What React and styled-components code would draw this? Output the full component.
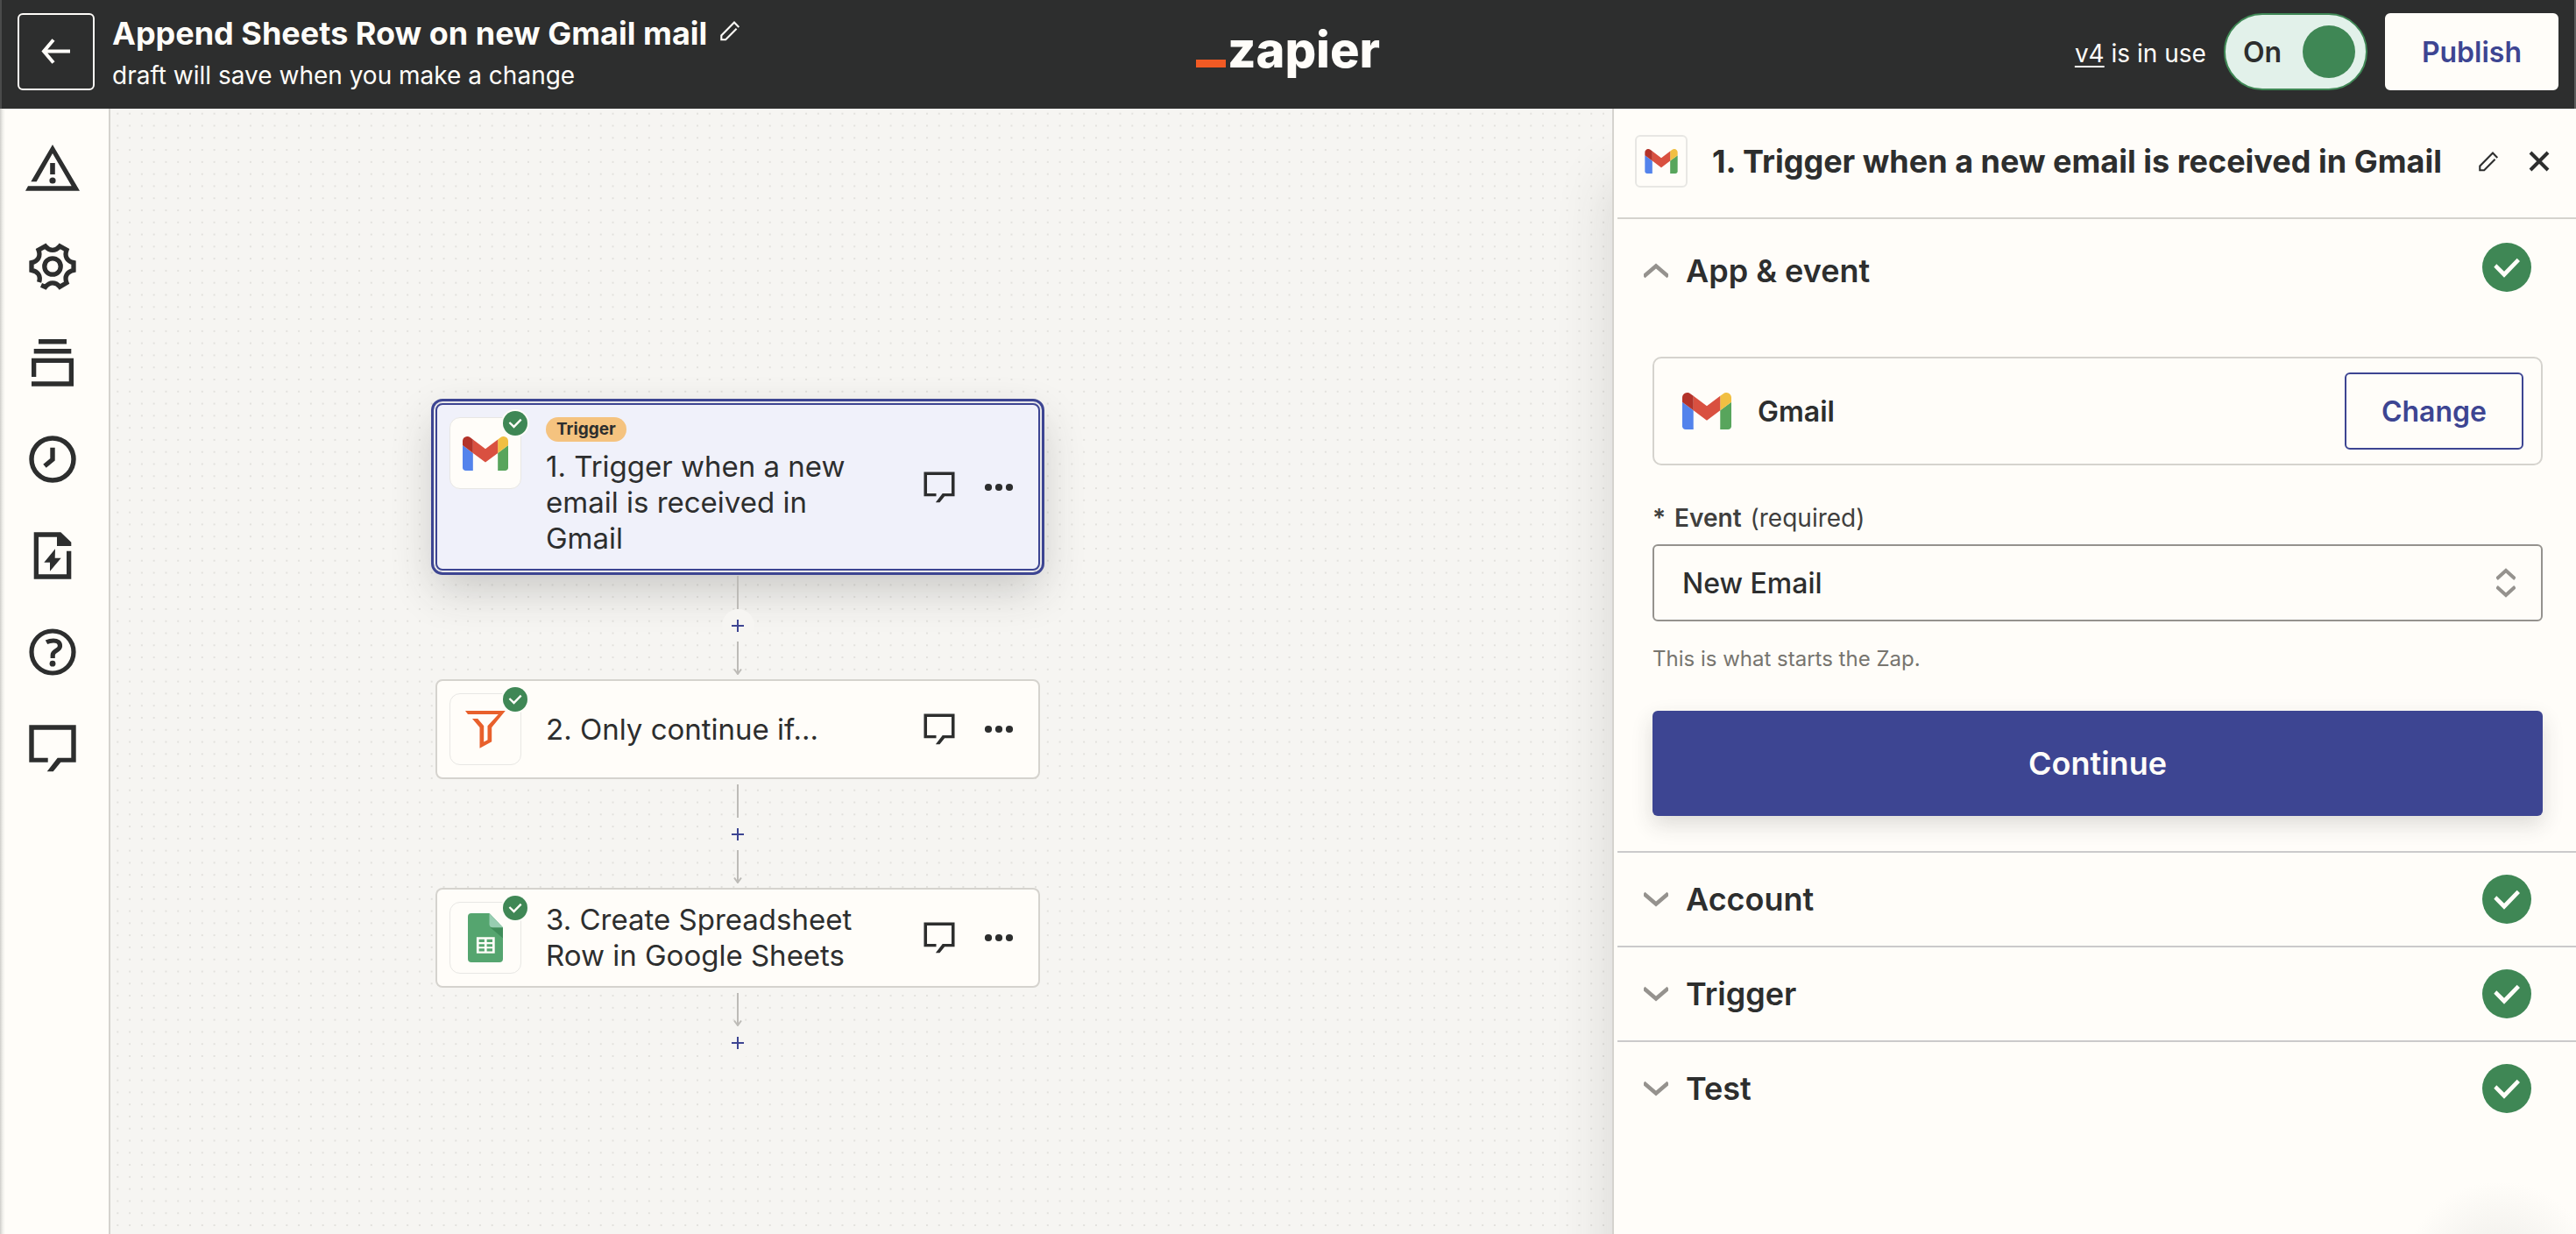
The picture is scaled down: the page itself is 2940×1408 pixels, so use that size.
import React, { useState } from "react";
import styled, { createGlobalStyle, css } from "styled-components";

const c = {
  ink: "#2d2e2e",
  paper: "#fffdf9",
  canvas: "#f6f5f2",
  line: "#d5d3ce",
  faint: "#e8e7e4",
  muted: "#95928e",
  indigo: "#3d4592",
  green: "#3f8755",
};

const GlobalStyle = createGlobalStyle`
  *, *::before, *::after { box-sizing: border-box; }
  body {
    margin: 0;
    font-family: Inter, "Liberation Sans", sans-serif;
    color: ${c.ink};
    background: ${c.paper};
  }
  button, select, input { font: inherit; color: inherit; }
  button { cursor: pointer; }
  h1, h2, p { margin: 0; }
  svg { display: block; flex: none; }
`;

/* ---------- icons ---------- */

const Svg = ({ w = 64, h = w, box = "0 0 64 64", children }) => (
  <svg width={w} height={h} viewBox={box} fill="currentColor" aria-hidden="true">
    {children}
  </svg>
);

const ArrowLeft = () => (
  <Svg w={34} h={30} box="0 0 34 30">
    <path d="M14 1.5 3 14.5 14 27.5M3 14.5h30" fill="none" stroke="currentColor" strokeWidth="4" />
  </Svg>
);

const Pencil = () => (
  <Svg w={24} box="0 0 24 24">
    <path
      d="M22.3 8 17 2.6 2.3 17.4V22.2H7.2L19.6 9.8"
      fill="none"
      stroke="currentColor"
      strokeWidth="2.1"
    />
  </Svg>
);

const Close = () => (
  <Svg w={24} box="0 0 24 24">
    <path d="M2 2 22 22M22 2 2 22" fill="none" stroke="currentColor" strokeWidth="4" />
  </Svg>
);

const Warning = () => (
  <Svg>
    <path d="M32 3 63 55.7H1L4 50.3H53.7L32 13 13.7 45.3H7.3ZM29.2 24h5.6v13h-5.6z" />
    <circle cx="32" cy="44" r="3.6" />
  </Svg>
);

const Gear = () => (
  <Svg>
    <g fill="none" stroke="currentColor" strokeWidth="5.3">
      <path d="M19 53.4 23.8 55.4C28.5 49.3 35.5 49.3 40.2 55.2L48 50.7C45.2 43.6 48.6 37.8 56 36.3V27.6C48.6 26.2 45.2 20.4 48 13.3L40.2 9C35.5 14.7 28.5 14.7 23.8 9L16 13.3C18.8 20.4 15.4 26.2 8 27.6V36.3C15.4 37.8 18.8 42.5 16.6 50" />
      <circle cx="32" cy="32" r="9.2" />
    </g>
  </Svg>
);

const Stack = () => (
  <Svg>
    <path d="M16 5h32v5.6H16zM10.7 16h42.6v5.4H10.7zM8 26.7H56V58.7H8V53.3H50.7V32H13.3V48H8Z" />
  </Svg>
);

const Clock = () => (
  <Svg>
    <g fill="none" stroke="currentColor" strokeWidth="5.4">
      <circle cx="32" cy="32" r="24" />
      <path d="M32 18.7V32.2L23 39.7" />
    </g>
  </Svg>
);

const ZapFile = () => (
  <Svg>
    <path d="M10.7 5.3H41.3L53.3 16.7V21H37V10.7H16V53.3H48V26.7H53.3V58.7H10.7ZM35 24.3 34.7 34.7H41.7L29 49.7V39.7H22.3Z" />
  </Svg>
);

const Help = () => (
  <Svg>
    <g fill="none" stroke="currentColor" strokeWidth="5.2">
      <circle cx="32" cy="32" r="24" />
      <path d="M25 20.8Q28.5 19 33 19C37.6 19 40.5 21.3 40.5 25C40.5 30.6 32.2 29.8 32.2 35.4V39" />
    </g>
    <circle cx="32" cy="45.2" r="3.4" />
  </Svg>
);

const Chat = ({ w }) => (
  <Svg w={w}>
    <path d="M5.3 5.3H58.7V47.7H41.3L32.7 58.3H25.7L37.7 42.7H53.3V10.7H10.7V42.7H26.7V47.7H5.3Z" />
  </Svg>
);

const Dots = () => (
  <Svg w={34} h={10} box="0 0 34 10">
    <circle cx="5" cy="5" r="4.1" />
    <circle cx="17" cy="5" r="4.1" />
    <circle cx="29" cy="5" r="4.1" />
  </Svg>
);

const Chevron = ({ up }) => (
  <Svg w={28} h={18} box="0 0 28 18">
    <path
      d={up ? "M0 15.5 14 3.5 28 15.5" : "M0 2.5 14 14.5 28 2.5"}
      fill="none"
      stroke={c.muted}
      strokeWidth="4.4"
    />
  </Svg>
);

const UpDown = () => (
  <Svg w={22} h={34} box="0 0 22 34">
    <path
      d="M.5 12.5 11 3 21.5 12.5M.5 21.5 11 31 21.5 21.5"
      fill="none"
      stroke={c.muted}
      strokeWidth="4"
    />
  </Svg>
);

const Check = ({ w }) => (
  <Svg w={w} box="0 0 56 56">
    <circle cx="28" cy="28" r="28" fill={c.green} />
    <path d="M16.3 24.3 25 32.7 39.7 17.7 43 21 25 39.7 13.3 27.7Z" fill={c.paper} />
  </Svg>
);

const GmailLogo = ({ w, h }) => (
  <Svg w={w} h={h} box="52 42 88 66">
    <path fill="#5383ec" d="M58 108h14V74L52 59v43c0 3.32 2.69 6 6 6" />
    <path fill="#58a55c" d="M120 108h14c3.32 0 6-2.69 6-6V59l-20 15" />
    <path fill="#f1bf42" d="M120 48v26l20-15v-8c0-7.42-8.47-11.65-14.4-7.2" />
    <path fill="#d95040" d="M72 74V48l24 18 24-18v26L96 92" />
    <path fill="#b3332a" d="M52 51v8l20 15V48l-5.6-4.2c-5.94-4.45-14.4-.22-14.4 7.2" />
  </Svg>
);

const FilterLogo = () => (
  <Svg w={46} h={43} box="0 0 46 43">
    <path
      fill="#e8602c"
      d="M0 0H45.8L30.2 19V35.3L16.5 42.7V19L8 9H14.2L21.2 17.3V35.5L25.5 33.3V17.3L37.8 4H3Z"
    />
  </Svg>
);

const SheetsLogo = () => (
  <Svg w={40} h={56} box="0 0 40 56">
    <path fill="#55a56f" d="M4 0H24.5L40 16.3V52a4 4 0 0 1-4 4H4a4 4 0 0 1-4-4V4a4 4 0 0 1 4-4Z" />
    <path fill="#3f8c59" d="M25.5 16.3H40V28.5Z" />
    <path fill="#97cdb1" d="M24.5 0 40 16.3H28.5a4 4 0 0 1-4-4Z" />
    <path
      fill="#fffdf9"
      fillRule="evenodd"
      d="M9.9 27.3H30.7V45.7H9.9ZM12.6 29.8V33H18.9V29.8ZM21.6 29.8V33H28V29.8ZM12.6 35.2V38.2H18.9V35.2ZM21.6 35.2V38.2H28V35.2ZM12.6 40.3V43.5H18.9V40.3ZM21.6 40.3V43.5H28V40.3Z"
    />
  </Svg>
);

/* ---------- page frame ---------- */

const Page = styled.div`
  min-height: 100vh;
  display: flex;
  flex-direction: column;
`;

const Header = styled.header`
  position: relative;
  z-index: 2;
  display: grid;
  grid-template-columns: 1fr auto 1fr;
  align-items: center;
  padding: 15px 20px 21px;
  color: ${c.paper};
  background: ${c.ink};
  box-shadow: inset 2px 0 #4a4b4b, inset -2px 0 #5c5d5d;
`;

const HeaderSide = styled.div`
  display: flex;
  align-items: center;
  justify-content: ${(p) => (p.$end ? "flex-end" : "flex-start")};
  gap: 20px;
`;

const BackButton = styled.button`
  display: grid;
  place-items: center;
  width: 88px;
  height: 88px;
  padding: 0;
  color: ${c.paper};
  background: none;
  border: 2px solid ${c.paper};
  border-radius: 6px;
`;

const TitleBlock = styled.div`
  display: grid;
  gap: 8px;
`;

const TitleRow = styled.div`
  display: flex;
  align-items: flex-start;
  gap: 14px;
`;

const ZapTitle = styled.h1`
  font-size: 36px;
  line-height: 46px;
  font-weight: 700;
  white-space: nowrap;
`;

const IconButton = styled.button`
  display: grid;
  place-items: center;
  padding: ${(p) => p.$pad || "0"};
  border: 0;
  background: none;
  color: inherit;
`;

const DraftNote = styled.p`
  font-size: 28px;
  line-height: 34px;
`;

const Logo = styled.a`
  display: flex;
  align-items: baseline;
  gap: 2px;
  margin-bottom: 4px;
  color: ${c.paper};
  text-decoration: none;
  font-size: 56px;
  line-height: 60px;
  font-weight: 800;
`;

const LogoBar = styled.span`
  width: 34px;
  height: 9px;
  background: #f15a24;
`;

const VersionNote = styled.p`
  padding-top: 4px;
  font-size: 28px;
  line-height: 34px;
  a {
    color: inherit;
    text-underline-offset: 4px;
    text-decoration-thickness: 2px;
  }
`;

const Toggle = styled.label`
  display: flex;
  align-items: center;
  justify-content: space-between;
  width: 164px;
  height: 88px;
  padding: 0 12px 0 20px;
  border: 2px solid ${c.green};
  border-radius: 44px;
  background: #e2f1ea;
  color: ${c.ink};
  font-size: 32px;
  font-weight: 600;
`;

const Knob = styled.input`
  appearance: none;
  width: 60px;
  height: 60px;
  margin: 0;
  border-radius: 50%;
  background: ${c.green};
`;

const Button = styled.button`
  height: 88px;
  padding: 0 40px;
  border: 2px solid ${(p) => (p.$outlined ? c.indigo : c.paper)};
  border-radius: 6px;
  background: ${c.paper};
  color: ${c.indigo};
  font-size: 32px;
  font-weight: 600;
`;

const Body = styled.div`
  flex: 1;
  display: flex;
  overflow: hidden;
`;

const Sidebar = styled.nav`
  display: flex;
  flex-direction: column;
  gap: 46px;
  padding: 38px 32px 38px 28px;
  border-right: 2px solid ${c.line};
  background: linear-gradient(to right, #cfcecb, #f0efeb 3px, ${c.paper} 6px);
`;

/* ---------- canvas ---------- */

const Canvas = styled.main`
  position: relative;
  flex: 1;
  background: ${c.canvas};
  padding: 336px 0 0 371px;
`;

const DotGrid = styled.svg`
  position: absolute;
  inset: 0;
  width: 100%;
  height: 100%;
`;

const Flow = styled.div`
  position: relative;
  width: 690px;
  display: flex;
  flex-direction: column;
  align-items: stretch;
`;

const Card = styled.article`
  display: flex;
  align-items: center;
  min-height: 114px;
  padding: 14px 28px 14px 14px;
  border: 2px solid ${c.line};
  border-radius: 8px;
  background: ${c.paper};
  ${(p) =>
    p.$selected &&
    css`
      border-color: ${c.indigo};
      background: #f0f1fa;
      outline: 3px solid ${c.indigo};
      outline-offset: 2px;
      box-shadow: 0 0 0 2px #e8e8ea, 0 20px 50px rgba(45, 46, 46, 0.24);
    `}
`;

const AppTile = styled.div`
  position: relative;
  align-self: flex-start;
  display: grid;
  place-items: center;
  flex: none;
  width: 82px;
  height: 82px;
  border: 1px solid ${c.faint};
  border-radius: 12px;
  background: ${c.paper};
`;

const StatusBadge = styled.span`
  position: absolute;
  top: -10px;
  right: -10px;
  padding: 2px;
  border-radius: 50%;
  background: ${c.paper};
`;

const CardText = styled.div`
  flex: 1;
  display: flex;
  flex-direction: column;
  align-items: flex-start;
  gap: 8px;
  margin: 0 44px 0 28px;
`;

const Pill = styled.span`
  padding: 0 12px;
  border-radius: 14px;
  background: #f5c37f;
  font-size: 19px;
  line-height: 28px;
  font-weight: 700;
`;

const StepTitle = styled.h2`
  font-size: 33px;
  line-height: 41px;
  font-weight: 400;
`;

const CardActions = styled.div`
  display: flex;
  align-items: center;
  gap: 30px;
`;

const Connector = styled.div`
  display: flex;
  flex-direction: column;
  align-items: center;
  padding: 6px 0 5px;
  color: #bdbbb7;
`;

const AddStep = styled.button`
  display: grid;
  place-items: center;
  width: 37px;
  height: 37px;
  padding: 0;
  border: 0;
  border-radius: 50%;
  background: ${c.canvas};
  color: ${c.indigo};
`;

const Line = ({ arrow }) => (
  <Svg w={12} h={38} box="0 0 12 38">
    <path
      d={arrow ? "M6 0V37M2 31.5 6 37 10 31.5" : "M6 0V38"}
      fill="none"
      stroke="currentColor"
      strokeWidth="2"
    />
  </Svg>
);

const Plus = () => (
  <Svg w={14} box="0 0 14 14">
    <path d="M7 0V14M0 7H14" fill="none" stroke="currentColor" strokeWidth="2" />
  </Svg>
);

/* ---------- step panel ---------- */

const Panel = styled.aside`
  position: relative;
  width: 1100px;
  flex: none;
  padding-left: 4px;
  border-left: 2px solid ${c.line};
  background: radial-gradient(circle 110px at 1010px calc(100% + 50px), #ecebe7, ${c.paper}) ${c.paper};
  box-shadow: 0 80px 60px rgba(45, 46, 46, 0.16);
`;

const PanelHeader = styled.div`
  display: flex;
  align-items: center;
  height: 126px;
  padding: 0 30px 4px 20px;
  border-bottom: 2px solid ${c.line};
`;

const PanelTile = styled.div`
  display: grid;
  place-items: center;
  width: 60px;
  height: 60px;
  border: 2px solid ${c.faint};
  border-radius: 6px;
`;

const PanelTitle = styled.h2`
  flex: 1;
  margin-left: 28px;
  font-size: 36px;
  line-height: 44px;
  font-weight: 700;
  white-space: nowrap;
`;

const PanelActions = styled.div`
  display: flex;
  gap: 34px;
`;

const Section = styled.section`
  & + & {
    border-top: 2px solid #cbcacb;
  }
`;

const SectionToggle = styled.button`
  display: flex;
  align-items: ${(p) => (p.$open ? "flex-end" : "center")};
  width: 100%;
  padding: ${(p) => (p.$open ? "27px" : "25px")} 51px 25px 30px;
  border: 0;
  background: none;
  text-align: left;
`;

const SectionLabel = styled.span`
  flex: 1;
  display: flex;
  align-items: center;
  gap: 20px;
  font-size: 36px;
  line-height: 48px;
  font-weight: 600;
`;

const SectionBody = styled.div`
  padding: 49px 38px 40px 40px;
`;

const AppPicker = styled.div`
  display: flex;
  align-items: center;
  gap: 30px;
  padding: 16px 20px 16px 32px;
  border: 2px solid ${c.line};
  border-radius: 10px;
  font-size: 32px;
  font-weight: 600;
`;

const AppName = styled.span`
  flex: 1;
`;

const FieldLabel = styled.label`
  display: flex;
  gap: 10px;
  margin: 43px 0 13px;
  font-size: 28px;
  line-height: 34px;
  color: #403f3e;
  strong { font-weight: 600; }
`;

const SelectBox = styled.div`
  position: relative;
`;

const Select = styled.select`
  appearance: none;
  display: block;
  width: 100%;
  height: 88px;
  padding: 0 80px 0 32px;
  border: 2px solid ${c.muted};
  border-radius: 6px;
  background: none;
  font-size: 32px;
  font-weight: 500;
`;

const SelectArrows = styled.span`
  position: absolute;
  top: 27px;
  right: 31px;
  pointer-events: none;
`;

const HelpText = styled.p`
  margin: 26px 0 42px;
  font-size: 24px;
  line-height: 34px;
  color: #77756f;
`;

const ContinueButton = styled.button`
  display: block;
  width: 100%;
  height: 120px;
  border: 0;
  border-radius: 6px;
  background: ${c.indigo};
  color: ${c.paper};
  font-size: 36px;
  font-weight: 600;
  box-shadow: 0 10px 24px rgba(45, 46, 46, 0.16);
`;

/* ---------- content ---------- */

const tools = [
  ["Issues", Warning],
  ["Settings", Gear],
  ["Versions", Stack],
  ["History", Clock],
  ["Zap details", ZapFile],
  ["Help", Help],
  ["Comments", Chat],
];

const steps = [
  { title: "1. Trigger when a new email is received in Gmail", tag: "Trigger", logo: <GmailLogo w={52} h={39} /> },
  { title: "2. Only continue if...", logo: <FilterLogo /> },
  { title: "3. Create Spreadsheet Row in Google Sheets", logo: <SheetsLogo /> },
];

function Step({ step, selected }) {
  return (
    <Card $selected={selected}>
      <AppTile>
        {step.logo}
        <StatusBadge>
          <Check w={28} />
        </StatusBadge>
      </AppTile>
      <CardText>
        {step.tag && <Pill>{step.tag}</Pill>}
        <StepTitle>{step.title}</StepTitle>
      </CardText>
      <CardActions>
        <IconButton aria-label="Comment">
          <Chat w={42} />
        </IconButton>
        <IconButton aria-label="More actions">
          <Dots />
        </IconButton>
      </CardActions>
    </Card>
  );
}

function CollapsedSection({ label }) {
  return (
    <Section>
      <SectionToggle aria-expanded="false">
        <SectionLabel>
          <Chevron />
          {label}
        </SectionLabel>
        <Check w={56} />
      </SectionToggle>
    </Section>
  );
}

export default function App() {
  const [on, setOn] = useState(true);
  return (
    <Page>
      <GlobalStyle />
      <Header>
        <HeaderSide>
          <BackButton aria-label="Back">
            <ArrowLeft />
          </BackButton>
          <TitleBlock>
            <TitleRow>
              <ZapTitle>Append Sheets Row on new Gmail mail</ZapTitle>
              <IconButton $pad="8px 0 0" aria-label="Rename Zap">
                <Pencil />
              </IconButton>
            </TitleRow>
            <DraftNote>draft will save when you make a change</DraftNote>
          </TitleBlock>
        </HeaderSide>
        <Logo href="#">
          <LogoBar />
          zapier
        </Logo>
        <HeaderSide $end>
          <VersionNote>
            <a href="#v4">v4</a> is in use
          </VersionNote>
          <Toggle>
            On
            <Knob type="checkbox" role="switch" checked={on} onChange={() => setOn(!on)} />
          </Toggle>
          <Button>Publish</Button>
        </HeaderSide>
      </Header>
      <Body>
        <Sidebar>
          {tools.map(([name, Icon]) => (
            <IconButton key={name} aria-label={name}>
              <Icon />
            </IconButton>
          ))}
        </Sidebar>
        <Canvas>
          <DotGrid aria-hidden="true">
            <defs>
              <pattern id="dots" width="13.786" height="13.786" patternUnits="userSpaceOnUse" x="1.4" y="-1.2">
                <circle cx="6.9" cy="6.9" r="0.9" fill="#dad8d4" />
              </pattern>
            </defs>
            <rect width="100%" height="100%" fill="url(#dots)" />
          </DotGrid>
          <Flow>
            <Step step={steps[0]} selected />
            <Connector>
              <Line />
              <AddStep aria-label="Add step">
                <Plus />
              </AddStep>
              <Line arrow />
            </Connector>
            <Step step={steps[1]} />
            <Connector>
              <Line />
              <AddStep aria-label="Add step">
                <Plus />
              </AddStep>
              <Line arrow />
            </Connector>
            <Step step={steps[2]} />
            <Connector>
              <Line arrow />
              <AddStep aria-label="Add step">
                <Plus />
              </AddStep>
            </Connector>
          </Flow>
        </Canvas>
        <Panel>
          <PanelHeader>
            <PanelTile>
              <GmailLogo w={38} h={28} />
            </PanelTile>
            <PanelTitle>1. Trigger when a new email is received in Gmail</PanelTitle>
            <PanelActions>
              <IconButton aria-label="Rename step">
                <Pencil />
              </IconButton>
              <IconButton aria-label="Close">
                <Close />
              </IconButton>
            </PanelActions>
          </PanelHeader>
          <Section>
            <SectionToggle $open aria-expanded="true">
              <SectionLabel>
                <Chevron up />
                App &amp; event
              </SectionLabel>
              <Check w={56} />
            </SectionToggle>
            <SectionBody>
              <AppPicker>
                <GmailLogo w={56} h={42} />
                <AppName>Gmail</AppName>
                <Button $outlined>Change</Button>
              </AppPicker>
              <FieldLabel htmlFor="event">
                <strong>*</strong>
                <strong>Event</strong>
                <span>(required)</span>
              </FieldLabel>
              <SelectBox>
                <Select id="event" defaultValue="new">
                  <option value="new">New Email</option>
                </Select>
                <SelectArrows>
                  <UpDown />
                </SelectArrows>
              </SelectBox>
              <HelpText>This is what starts the Zap.</HelpText>
              <ContinueButton>Continue</ContinueButton>
            </SectionBody>
          </Section>
          <CollapsedSection label="Account" />
          <CollapsedSection label="Trigger" />
          <CollapsedSection label="Test" />
        </Panel>
      </Body>
    </Page>
  );
}
